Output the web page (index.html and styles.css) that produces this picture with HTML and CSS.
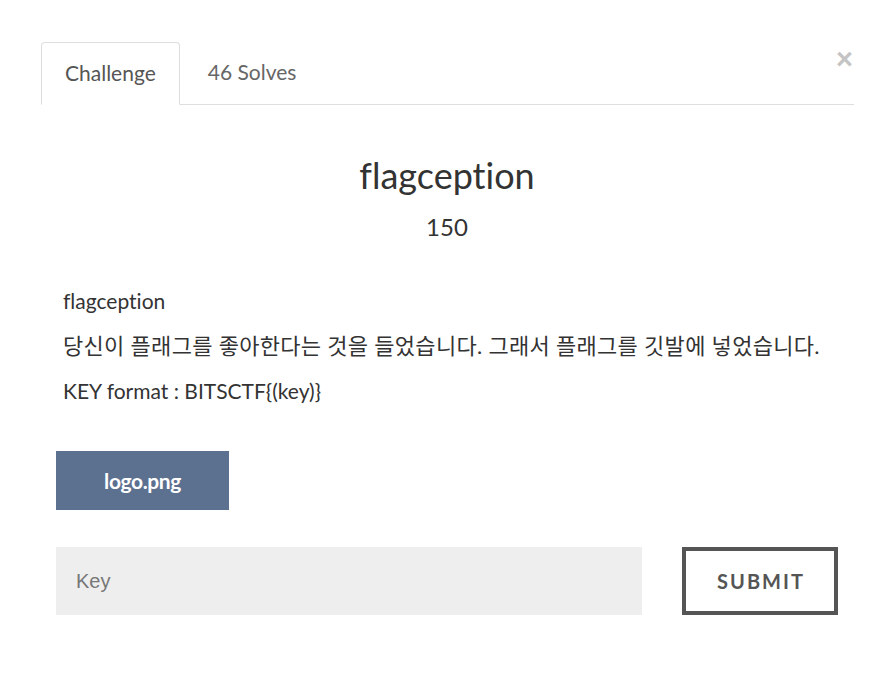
FILE: index.html
```html
<!DOCTYPE html>
<html lang="ko">
<head>
<meta charset="utf-8">
<link rel="stylesheet" href="styles.css">
</head>
<body>
<div class="modal">
  <button class="close" type="button">&times;</button>
  <ul class="tabs">
    <li class="tab active">Challenge</li>
    <li class="tab">46 Solves</li>
  </ul>
  <div class="content">
    <h2 class="name">flagception</h2>
    <h3 class="value">150</h3>
    <div class="desc">
      <p>flagception</p>
      <p class="ko">당신이 플래그를 좋아한다는 것을 들었습니다. 그래서 플래그를 깃발에 넣었습니다.</p>
      <p>KEY format : BITSCTF{(key)}</p>
    </div>
    <div class="files">
      <a class="file">logo.png</a>
    </div>
    <div class="submit-row">
      <input class="key" type="text" placeholder="Key">
      <button class="submit" type="button">SUBMIT</button>
    </div>
  </div>
</div>
</body>
</html>
```
FILE: styles.css
```css
html, body {
  margin: 0;
  padding: 0;
  background: #fff;
}
body {
  font-family: Lato, "Noto Sans CJK KR", sans-serif;
  font-variant-ligatures: none;
  color: #333;
}
.modal {
  position: relative;
  margin: 42px 40px 0 41px;
}
.close {
  position: absolute;
  right: 1px;
  top: 4px;
  border: 0;
  background: none;
  font-family: "Liberation Sans", Arial, sans-serif;
  font-size: 29px;
  font-weight: bold;
  color: #c4c4c4;
  padding: 0;
  line-height: 26px;
  cursor: pointer;
}
.tabs {
  list-style: none;
  margin: 0;
  padding: 0;
  display: flex;
  border-bottom: 1px solid #dedede;
}
.tab {
  height: 61px;
  box-sizing: border-box;
  padding: 0 23px 3px 23px;
  margin-right: 4px;
  margin-bottom: -1px;
  display: flex;
  align-items: center;
  font-size: 21px;
  color: #666;
  border: 1px solid transparent;
  border-radius: 4px 4px 0 0;
}
.tab.active {
  color: #555;
  border-color: #dedede;
  border-bottom-color: #fff;
  background: #fff;
  height: 63px;
}
.content {
  padding: 0 16px 0 15px;
}
.name {
  margin: 48px 0 0;
  text-align: center;
  font-size: 36px;
  font-weight: 400;
  line-height: 44px;
  color: #333;
}
.value {
  margin: 15px 0 0;
  text-align: center;
  font-size: 24px;
  font-weight: 400;
  line-height: 30px;
  color: #333;
}
.desc {
  margin-top: 44px;
  padding-left: 7px;
  font-size: 21px;
}
.desc p {
  margin: 0 0 15px;
  line-height: 30px;
}
.desc p.ko {
  font-size: 22px;
  letter-spacing: 0.3px;
}
.files {
  margin-top: 45px;
  display: flex;
}
.file {
  width: 173px;
  height: 59px;
  background: #5c7090;
  color: #fff;
  font-weight: 700;
  font-size: 21px;
  letter-spacing: -0.4px;
  display: flex;
  align-items: center;
  justify-content: center;
}
.submit-row {
  margin-top: 37px;
  display: flex;
  justify-content: space-between;
  align-items: stretch;
}
.key {
  width: 586px;
  height: 68px;
  box-sizing: border-box;
  border: 0;
  background: #eee;
  padding: 0 20px;
  font-family: "Liberation Sans", Arial, sans-serif;
  font-size: 20px;
  color: #333;
  outline: none;
}
.key::placeholder {
  color: #777;
}
.submit {
  width: 156px;
  height: 68px;
  box-sizing: border-box;
  border: 4px solid #555;
  background: #fff;
  color: #555;
  font-family: Lato, sans-serif;
  font-weight: 700;
  font-size: 20px;
  letter-spacing: 2px;
  padding: 0 0 0 2px;
}
```
